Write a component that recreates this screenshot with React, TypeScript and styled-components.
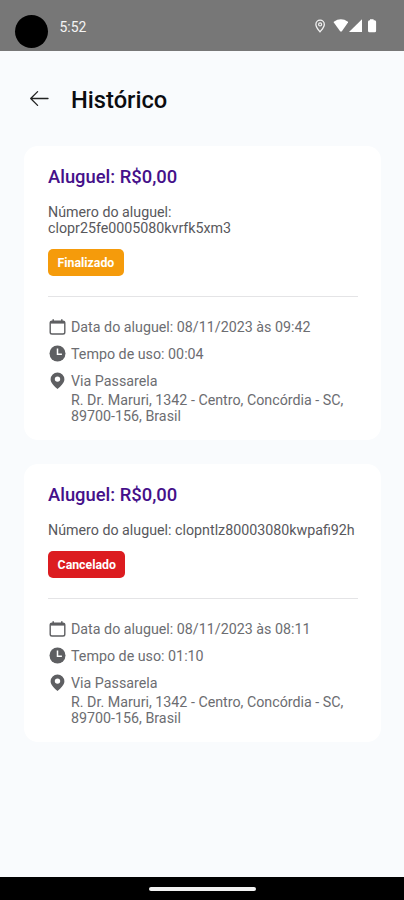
import React from 'react';
import styled, { createGlobalStyle } from 'styled-components';

const GlobalStyle = createGlobalStyle`
  * { box-sizing: border-box; }
  body { margin: 0; background: #f9fbfd; font-family: Roboto, sans-serif; }
  h1, h2, p { margin: 0; font-weight: 400; }
  svg { display: block; flex: none; }
`;

const Screen = styled.div`
  width: 404px;
  height: 900px;
  display: flex;
  flex-direction: column;
  overflow: hidden;
  background: #f9fbfd;
`;

const StatusBar = styled.header`
  height: 51px;
  flex: none;
  display: flex;
  align-items: flex-start;
  padding: 15px 25px 0 15px;
  background: #777777;
  color: #f4f4f4;
`;

const Camera = styled.span`
  width: 33px;
  height: 33px;
  border-radius: 50%;
  background: #000;
`;

const Clock = styled.span`
  margin: 4px auto 0 11.5px;
  font-size: 13.9px;
  line-height: 16px;
`;

const StatusIcons = styled.div`
  display: flex;
  gap: 7px;
  margin-top: 4px;
`;

const TitleBar = styled.div`
  flex: none;
  display: flex;
  align-items: center;
  height: 95px;
  padding-left: 29px;
  gap: 22px;
`;

const BackButton = styled.button`
  display: block;
  border: 0;
  padding: 0;
  background: none;
`;

const PageTitle = styled.h1`
  padding-top: 2px;
  font-size: 23.7px;
  line-height: 28px;
  font-weight: 500;
  color: #0b0c10;
`;

const CardList = styled.main`
  flex: 1;
  display: flex;
  flex-direction: column;
  gap: 24px;
  padding: 0 23px 0 24px;
`;

const Card = styled.article`
  padding: 20px 23px 16px 24px;
  border-radius: 14px;
  background: #fff;
`;

const Price = styled.h2`
  font-size: 18.4px;
  line-height: 22px;
  font-weight: 500;
  color: #45108a;
`;

const RentalNumber = styled.p`
  margin-top: 16px;
  font-size: 14.25px;
  line-height: 16px;
  color: #58585c;
  white-space: nowrap;
`;

const Badge = styled.span<{ $color: string }>`
  display: block;
  width: fit-content;
  height: 27px;
  margin-top: 13px;
  padding: 1px 9.6px 0;
  border-radius: 5px;
  background: ${(p) => p.$color};
  color: #fff;
  font-size: 12.3px;
  line-height: 27px;
  font-weight: 700;
`;

const Divider = styled.hr`
  height: 1px;
  margin: 20px 0 22px;
  border: 0;
  background: #e4e4e6;
`;

const DetailRow = styled.div`
  display: flex;
  align-items: center;
  gap: 4px;
  height: 16px;
  margin-bottom: 11px;
`;

const DetailText = styled.span`
  font-size: 14.27px;
  line-height: 16px;
  color: #6c6d71;
  white-space: nowrap;
`;

const Address = styled.p`
  margin: -8px 0 0 23px;
  font-size: 14.27px;
  line-height: 16px;
  color: #6c6d71;
  white-space: nowrap;
`;

const NavigationBar = styled.footer`
  flex: none;
  height: 23px;
  display: flex;
  justify-content: center;
  padding-top: 10px;
  background: #000;
`;

const HomeHandle = styled.span`
  width: 107px;
  height: 4px;
  border-radius: 2px;
  background: #f2f2f2;
`;

const LocationStatusIcon = () => (
  <svg width="11" height="14" viewBox="0 0 11 14" fill="none" stroke="#f2f2f2">
    <path d="M5 12.8C2.9 10.3.9 8.1.9 5.4a4.2 4.2 0 0 1 8.4 0c0 2.7-2.2 4.9-4.3 7.4Z" strokeWidth="1.3" />
    <circle cx="5.1" cy="5.4" r="1.5" strokeWidth="1.2" />
  </svg>
);

const SignalIcons = () => (
  <svg width="46" height="14" viewBox="0 0 46 14" fill="#fff">
    <path d="M0.8 3.4V2.7Q7.8-2 15 2.7v.7L8.7 12.4H7.3Z" />
    <path d="M16 13 29 0.3V13Z" />
    <path d="M37 0.3h3.6v1h1a1.5 1.5 0 0 1 1.5 1.5v8.9a1.5 1.5 0 0 1-1.5 1.5h-5.1a1.5 1.5 0 0 1-1.5-1.5V2.8a1.5 1.5 0 0 1 1.5-1.5h.5Z" />
  </svg>
);

const BackArrow = () => (
  <svg width="20" height="18" viewBox="0 0 20 18" fill="none" stroke="#222" strokeWidth="1.3" strokeLinecap="round" strokeLinejoin="round">
    <path d="M19 8.5H1.7M8.6 1.6 1.7 8.5l6.9 6.9" />
  </svg>
);

const CalendarIcon = () => (
  <svg width="19" height="18" viewBox="0 0 19 18" fill="none" stroke="#5e5f62">
    <rect x="2.2" y="3.2" width="14.6" height="12.8" rx="1.8" strokeWidth="1.4" />
    <path d="M2.4 4.3h14.2" strokeWidth="2.6" />
    <path d="M5.2 1.2v3M13.8 1.2v3" strokeWidth="1.5" />
  </svg>
);

const ClockIcon = () => (
  <svg width="19" height="18" viewBox="0 0 19 18" fill="none">
    <circle cx="9.5" cy="8.5" r="8" fill="#5e5f62" />
    <path d="M9.5 3.6v5.6h4.4" stroke="#fff" strokeWidth="1.5" />
  </svg>
);

const PinIcon = () => (
  <svg width="19" height="18" viewBox="0 0 19 18">
    <path
      fill="#5e5f62"
      fillRule="evenodd"
      d="M9.5.5A6.9 6.9 0 0 0 2.6 7.3c0 4 3.9 7 6.9 9.8 3-2.8 6.9-5.8 6.9-9.8A6.9 6.9 0 0 0 9.5.5Zm0 3.9a2.7 2.7 0 1 1 0 5.4 2.7 2.7 0 0 1 0-5.4Z"
    />
  </svg>
);

type Rental = {
  number: React.ReactNode;
  status: string;
  color: string;
  date: string;
  duration: string;
};

const rentals: Rental[] = [
  {
    number: <>Número do aluguel:<br />clopr25fe0005080kvrfk5xm3</>,
    status: 'Finalizado',
    color: '#f59b0b',
    date: '08/11/2023 às 09:42',
    duration: '00:04',
  },
  {
    number: 'Número do aluguel: clopntlz80003080kwpafi92h',
    status: 'Cancelado',
    color: '#dc1c20',
    date: '08/11/2023 às 08:11',
    duration: '01:10',
  },
];

const RentalCard = ({ rental }: { rental: Rental }) => (
  <Card>
    <Price>Aluguel: R$0,00</Price>
    <RentalNumber>{rental.number}</RentalNumber>
    <Badge $color={rental.color}>{rental.status}</Badge>
    <Divider />
    <DetailRow>
      <CalendarIcon />
      <DetailText>Data do aluguel: {rental.date}</DetailText>
    </DetailRow>
    <DetailRow>
      <ClockIcon />
      <DetailText>Tempo de uso: {rental.duration}</DetailText>
    </DetailRow>
    <DetailRow>
      <PinIcon />
      <DetailText>Via Passarela</DetailText>
    </DetailRow>
    <Address>
      R. Dr. Maruri, 1342 - Centro, Concórdia - SC,
      <br />
      89700-156, Brasil
    </Address>
  </Card>
);

export default function App() {
  return (
    <>
      <GlobalStyle />
      <Screen>
        <StatusBar>
          <Camera />
          <Clock>5:52</Clock>
          <StatusIcons>
            <LocationStatusIcon />
            <SignalIcons />
          </StatusIcons>
        </StatusBar>
        <TitleBar>
          <BackButton aria-label="Voltar">
            <BackArrow />
          </BackButton>
          <PageTitle>Histórico</PageTitle>
        </TitleBar>
        <CardList>
          {rentals.map((rental) => (
            <RentalCard key={rental.status} rental={rental} />
          ))}
        </CardList>
        <NavigationBar>
          <HomeHandle />
        </NavigationBar>
      </Screen>
    </>
  );
}
